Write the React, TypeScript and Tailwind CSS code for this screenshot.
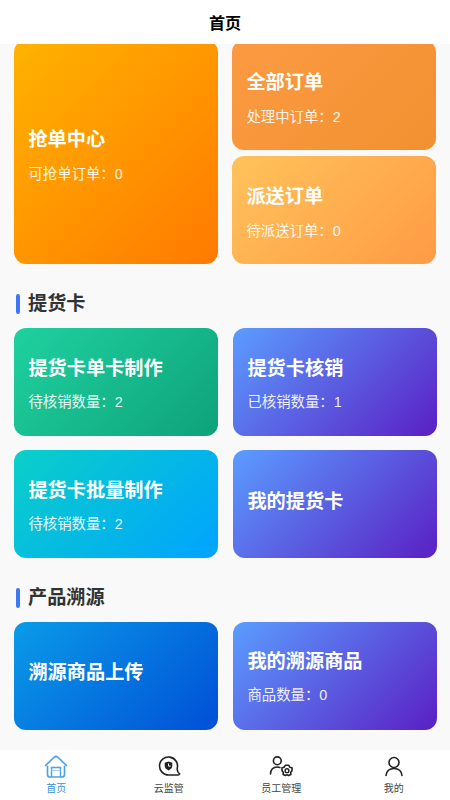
const FONT = "font-['Liberation_Sans','Noto_Sans_CJK_SC',sans-serif]";

function Card({ title, sub, className }: { title: string; sub?: string; className: string }) {
  return (
    <div className={`flex flex-col justify-center rounded-xl pl-[14.4px] text-white ${className}`}>
      <div className="text-[19.2px] font-bold leading-7">{title}</div>
      {sub && <div className="mt-[9px] text-[14.4px] leading-5 opacity-90">{sub}</div>}
    </div>
  );
}

function SectionTitle({ title }: { title: string }) {
  return (
    <div className="flex h-[64px] items-center pt-[16px] pl-[2px]">
      <span className="h-5 w-1 rounded-sm bg-[#3f78f5]" />
      <span className="ml-2 text-[19.2px] font-bold text-[#333333]">{title}</span>
    </div>
  );
}

function HomeIcon() {
  return (
    <svg width="24" height="24" viewBox="0 0 24 24" fill="none">
      <path d="M1.500 10.500 10.400 2a2.400 2.400 0 0 1 3.200 0l8.900 8.500" stroke="#4fa3e3" strokeWidth="1.700" strokeLinecap="round" strokeLinejoin="round" />
      <path d="M3.500 10.500V19.500a2.500 2.500 0 0 0 2.500 2.500h12a2.500 2.500 0 0 0 2.500-2.500V10.500" stroke="#4fa3e3" strokeWidth="1.700" />
      <path d="M7.500 22V12.500h9V22" stroke="#4fa3e3" strokeWidth="1.500" />
      <path d="M7.500 15.500h9" stroke="#a5d3f3" strokeWidth="1.300" />
    </svg>
  );
}

function MonitorIcon() {
  return (
    <svg width="24" height="24" viewBox="0 0 24 24" fill="none">
      <path d="M11.500 20a9 9 0 1 1 8.800-7c-.4 2.400.3 4.500 2.400 6-.3.600-.9 1-1.700 1Z" stroke="#222222" strokeWidth="1.600" strokeLinejoin="round" />
      <path d="M11.500 6.500l3.800 1.300v3c0 2.300-1.600 3.800-3.800 4.600-2.200-.8-3.800-2.300-3.800-4.600v-3Z" fill="#222222" />
      <path d="M11.500 8.500v2.600h2.100" stroke="#ffffff" strokeWidth="1" />
    </svg>
  );
}

function StaffIcon() {
  return (
    <svg width="24" height="24" viewBox="0 0 24 24" fill="none">
      <circle cx="8.300" cy="5.800" r="3.900" stroke="#222222" strokeWidth="1.600" />
      <path d="M1.500 19c.2-4.500 2.800-7 6.800-7 1 0 1.800.1 2.600.4" stroke="#222222" strokeWidth="1.600" strokeLinecap="round" />
      <path d="M16.300 10.300h3.400l1.100 1.900 2.200.5v3l-1.300 1.500.2 2.200-2.200 1-1.700-.7-1.700.7-2.200-1 .2-2.200-1.300-1.500v-3l2.200-.5Z" stroke="#222222" strokeWidth="1.600" strokeLinejoin="round" />
      <circle cx="18" cy="15.700" r="1.900" stroke="#222222" strokeWidth="1.400" />
    </svg>
  );
}

function MeIcon() {
  return (
    <svg width="24" height="24" viewBox="0 0 24 24" fill="none">
      <circle cx="12" cy="7.500" r="5" stroke="#222222" strokeWidth="1.600" />
      <path d="M4 20.500c.5-4.300 3.500-7 8-7s7.500 2.700 8 7" stroke="#222222" strokeWidth="1.600" strokeLinecap="round" />
    </svg>
  );
}

function Tab({ label, active, children }: { label: string; active?: boolean; children: React.ReactNode }) {
  return (
    <div className="flex flex-1 flex-col items-center pt-[5px]">
      {children}
      <span className={`mt-[3px] text-[10px] leading-[14px] ${active ? 'text-[#3b8fd4]' : 'text-[#444444]'}`}>{label}</span>
    </div>
  );
}

export default function App() {
  return (
    <div className={`flex h-screen flex-col overflow-hidden bg-[#f9f9f9] ${FONT}`}>
      <div className="z-10 flex h-11 shrink-0 items-center justify-center bg-white pt-[3px] text-[16px] font-bold text-black">首页</div>

      <div className="flex-1 overflow-hidden">
        {/* list is scrolled a little, the first row sits under the header */}
        <div className="-mt-[4px] flex gap-[14px] pl-[14px]">
          <Card
            title="抢单中心"
            sub="可抢单订单：0"
            className="h-[224px] w-[204px] bg-[linear-gradient(135deg,#ffb300,#ff7a00)] pt-[6px] [&>div:last-child]:mt-[10px]"
          />
          <div className="flex w-[204px] flex-col gap-[6px]">
            <Card
              title="全部订单"
              sub="处理中订单：2"
              className="h-[110px] bg-[linear-gradient(135deg,#fb9a42,#f29130)] pt-[6px] [&>div:last-child]:mt-[10px]"
            />
            <Card
              title="派送订单"
              sub="待派送订单：0"
              className="h-[108px] bg-[linear-gradient(135deg,#ffc25a,#ff9b45)] pt-[4px] [&>div:last-child]:mt-[10px]"
            />
          </div>
        </div>

        <div className="px-[14px]">
          <SectionTitle title="提货卡" />
          <div className="grid grid-cols-[204px_204px] gap-x-[15px] gap-y-[14px]">
            <Card
              title="提货卡单卡制作"
              sub="待核销数量：2"
              className="h-[108px] bg-[linear-gradient(135deg,#1fd1a0,#0ea27a)] pt-[2px]"
            />
            <Card
              title="提货卡核销"
              sub="已核销数量：1"
              className="h-[108px] bg-[linear-gradient(135deg,#5b9dff,#5a1fc4)] pt-[2px]"
            />
            <Card
              title="提货卡批量制作"
              sub="待核销数量：2"
              className="h-[108px] bg-[linear-gradient(135deg,#0ad0c8,#00a3ff)] pt-[2px]"
            />
            <Card title="我的提货卡" className="h-[108px] bg-[linear-gradient(135deg,#5b9dff,#5a1fc4)] pb-[4px]" />
          </div>

          <SectionTitle title="产品溯源" />
          <div className="grid grid-cols-[204px_204px] gap-x-[15px]">
            <Card title="溯源商品上传" className="h-[108px] bg-[linear-gradient(135deg,#0a9be8,#004fd6)] pb-[6px]" />
            <Card
              title="我的溯源商品"
              sub="商品数量：0"
              className="h-[108px] bg-[linear-gradient(135deg,#5b9dff,#5a1fc4)] pt-[1px]"
            />
          </div>
        </div>
      </div>

      <div className="flex h-[50px] shrink-0 bg-white">
        <Tab label="首页" active><HomeIcon /></Tab>
        <Tab label="云监管"><MonitorIcon /></Tab>
        <Tab label="员工管理"><StaffIcon /></Tab>
        <Tab label="我的"><MeIcon /></Tab>
      </div>
    </div>
  );
}
